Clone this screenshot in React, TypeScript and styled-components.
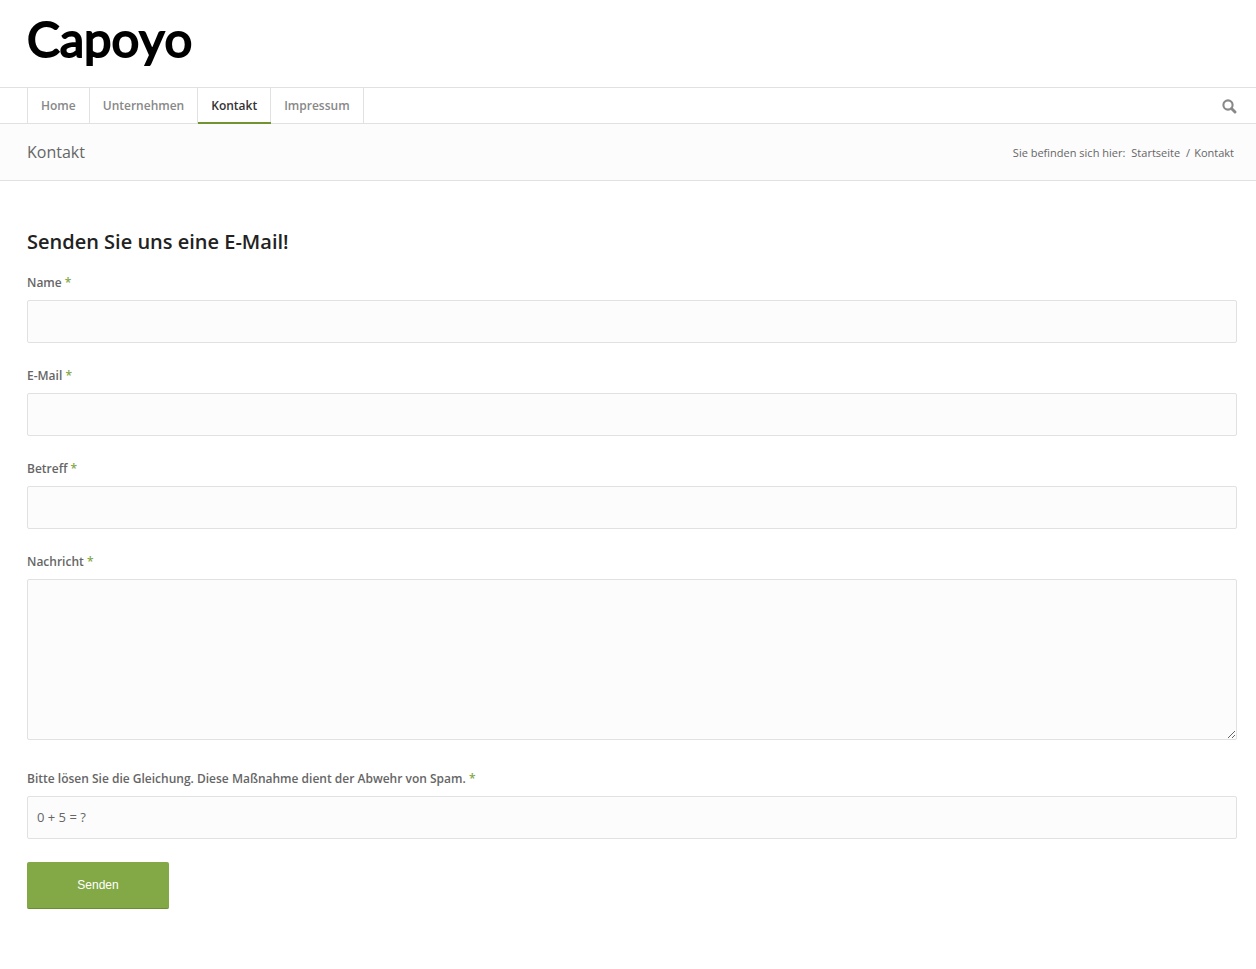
import React from "react";
import styled, { createGlobalStyle } from "styled-components";

const GlobalStyle = createGlobalStyle`
  *, *::before, *::after { box-sizing: border-box; }
  body {
    margin: 0;
    background: #fff;
    color: #666;
    font: 400 13px/20px "Open Sans", "Noto Sans", sans-serif;
  }
`;

const Header = styled.header`
  border-bottom: 1px solid #e1e1e1;
`;

const LogoRow = styled.div`
  display: flex;
  align-items: center;
  height: 87px;
  padding: 0 19px 12px 27px;
`;

const Logo = styled.a`
  color: #000;
  text-decoration: none;
  font: 400 49px/56px Lato, "Open Sans", sans-serif;
  font-kerning: none;
  -webkit-text-stroke: 2px #000;
  stroke-linejoin: round;
`;

const NavBar = styled.div`
  display: flex;
  justify-content: space-between;
  align-items: stretch;
  padding: 0 19px 0 27px;
  border-top: 1px solid #e1e1e1;
`;

const Menu = styled.nav`
  display: flex;
  height: 35px;
  border-left: 1px solid #e1e1e1;
`;

const MenuLink = styled.a<{ $active?: boolean }>`
  display: block;
  position: relative;
  padding: 0 13px;
  border-right: 1px solid #e1e1e1;
  color: ${(p) => (p.$active ? "#333" : "#888")};
  font-size: 12px;
  font-weight: 600;
  line-height: 35px;
  text-decoration: none;

  &::after {
    content: "";
    display: ${(p) => (p.$active ? "block" : "none")};
    position: absolute;
    left: 0;
    right: -1px;
    bottom: -1px;
    height: 2px;
    background: #719430;
  }
`;

const SearchButton = styled.button`
  display: flex;
  align-items: center;
  padding: 2px 0 0;
  border: 0;
  background: none;
  color: #888;
  cursor: pointer;
`;

const TitleBar = styled.div`
  display: flex;
  flex-wrap: wrap;
  justify-content: space-between;
  align-items: center;
  padding: 14px 22px 14px 27px;
  border-bottom: 1px solid #e1e1e1;
  background: #fcfcfc;
`;

const PageTitle = styled.h1`
  margin: 0;
  font-size: 16px;
  font-weight: 400;
  line-height: 28px;
`;

const Breadcrumb = styled.nav`
  display: flex;
  gap: 6px;
  padding-top: 2px;
  font-size: 11px;
  line-height: 20px;
`;

const Crumb = styled.a`
  color: inherit;
  text-decoration: none;
`;

const Current = styled.span`
  display: flex;
  gap: 4px;
`;

const Main = styled.main`
  padding: 48px 19px 60px 27px;
`;

const FormTitle = styled.h2`
  margin: 0 0 18px;
  color: #222;
  font-size: 20px;
  font-weight: 600;
  line-height: 26px;
`;

const Field = styled.div<{ $gap?: number }>`
  display: flex;
  flex-direction: column;
  margin-bottom: ${(p) => p.$gap ?? 23}px;
`;

const Label = styled.label`
  margin-bottom: 7px;
  font-size: 12px;
  font-weight: 600;
  line-height: 20px;
`;

const Required = styled.abbr`
  color: #83a846;
  text-decoration: none;
`;

const Input = styled.input`
  width: 100%;
  height: 43px;
  padding: 0 9px 2px;
  border: 1px solid #e1e1e1;
  border-radius: 2px;
  background: #fcfcfc;
  color: #666;
  font: inherit;

  &::placeholder { color: #666; opacity: 1; }
`;

const TextArea = styled.textarea`
  width: 100%;
  height: 161px;
  padding: 12px 9px;
  border: 1px solid #e1e1e1;
  border-radius: 2px;
  background: #fcfcfc;
  color: #666;
  font: inherit;
  resize: vertical;
`;

const SubmitButton = styled.button`
  display: block;
  min-width: 142px;
  height: 47px;
  padding: 0 16px;
  border: 0;
  border-bottom: 1px solid #6a8f2c;
  border-radius: 2px;
  background: #83a846;
  color: #fff;
  font: 400 12px/20px "Liberation Sans", sans-serif;
  cursor: pointer;
`;

const menu = ["Home", "Unternehmen", "Kontakt", "Impressum"];

function FieldLabel({ id, text }: { id: string; text: string }) {
  return (
    <Label htmlFor={id}>
      {text} <Required title="erforderlich">*</Required>
    </Label>
  );
}

export default function App() {
  return (
    <>
      <GlobalStyle />
      <Header>
        <LogoRow>
          <Logo href="#">Capoyo</Logo>
        </LogoRow>
        <NavBar>
          <Menu>
            {menu.map((item) => (
              <MenuLink key={item} href="#" $active={item === "Kontakt"}>
                {item}
              </MenuLink>
            ))}
          </Menu>
          <SearchButton type="button" aria-label="Suche">
            <svg width="15" height="15" viewBox="0 0 15 15" fill="none" stroke="currentColor">
              <circle cx="6" cy="6" r="4.6" strokeWidth="2.1" />
              <path d="M9.5 9.5L13 13" strokeWidth="2.9" strokeLinecap="round" />
            </svg>
          </SearchButton>
        </NavBar>
      </Header>
      <TitleBar>
        <PageTitle>Kontakt</PageTitle>
        <Breadcrumb>
          <span>Sie befinden sich hier:</span>
          <Crumb href="#">Startseite</Crumb>
          <Current>
            <span>/</span>
            <span>Kontakt</span>
          </Current>
        </Breadcrumb>
      </TitleBar>
      <Main>
        <form onSubmit={(e) => e.preventDefault()}>
          <FormTitle>Senden Sie uns eine E-Mail!</FormTitle>
          <Field>
            <FieldLabel id="name" text="Name" />
            <Input id="name" type="text" />
          </Field>
          <Field>
            <FieldLabel id="email" text="E-Mail" />
            <Input id="email" type="email" />
          </Field>
          <Field>
            <FieldLabel id="subject" text="Betreff" />
            <Input id="subject" type="text" />
          </Field>
          <Field $gap={29}>
            <FieldLabel id="message" text="Nachricht" />
            <TextArea id="message" />
          </Field>
          <Field>
            <FieldLabel
              id="captcha"
              text="Bitte lösen Sie die Gleichung. Diese Maßnahme dient der Abwehr von Spam."
            />
            <Input id="captcha" type="text" placeholder="0 + 5 = ?" />
          </Field>
          <SubmitButton type="submit">Senden</SubmitButton>
        </form>
      </Main>
    </>
  );
}
